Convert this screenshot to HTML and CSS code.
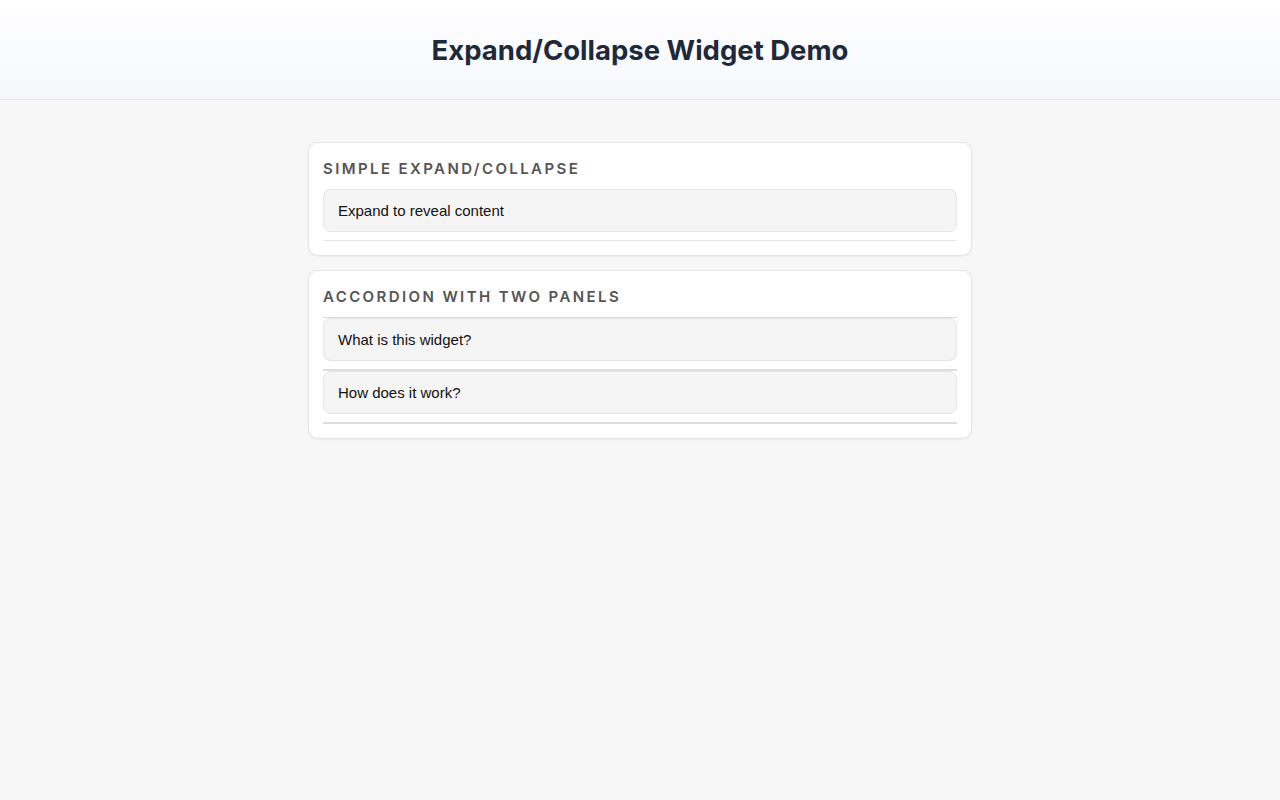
FILE: index.html
```html
<!DOCTYPE html>
<html lang="en">
<head>
    <meta charset="UTF-8">
    <meta name="viewport" content="width=device-width, initial-scale=1.0">
    <title>Expand/Collapse Widget Demo</title>
    <link rel="stylesheet" href="styles.css">
</head>
<body>
    <header class="page-header">
        <h1>Expand/Collapse Widget Demo</h1>
    </header>

    <main class="container">
        <section class="demo-card">
            <h2 class="demo-label">Simple Expand/Collapse</h2>
            <details class="panel panel-single">
                <summary>Expand to reveal content</summary>
                <div class="panel-body">This content is hidden until the panel is expanded.</div>
            </details>
        </section>

        <section class="demo-card">
            <h2 class="demo-label">Accordion with two panels</h2>
            <div class="accordion">
                <details class="panel" name="faq">
                    <summary>What is this widget?</summary>
                    <div class="panel-body">A small disclosure widget built on the native details element.</div>
                </details>
                <details class="panel" name="faq">
                    <summary>How does it work?</summary>
                    <div class="panel-body">Click a heading to open it; opening one panel closes the other.</div>
                </details>
            </div>
        </section>
    </main>
</body>
</html>
```

FILE: styles.css
```css
body {
    margin: 0;
    background: #f7f7f7;
    font-family: "Liberation Sans", Arial, sans-serif;
    color: #111;
}

.page-header {
    height: 99px;
    display: flex;
    align-items: center;
    justify-content: center;
    background: linear-gradient(#ffffff, #f5f7fb);
    border-bottom: 1px solid #e6e8ec;
}

.page-header h1 {
    margin: 0;
    font-family: Inter, "Noto Sans", sans-serif;
    font-size: 27.5px;
    line-height: 34px;
    font-weight: 700;
    color: #1e293b;
}

.container {
    max-width: 664px;
    margin: 0 auto;
    padding: 42px 0;
    display: flex;
    flex-direction: column;
    gap: 14px;
}

.demo-card {
    background: #fff;
    border: 1px solid #e5e5e5;
    border-radius: 10px;
    padding: 14px;
    box-shadow: 0 1px 2px rgba(0, 0, 0, 0.05);
}

.demo-label {
    margin: 0 0 8px;
    font-family: Inter, "Noto Sans", sans-serif;
    font-size: 15px;
    line-height: 24px;
    font-weight: 600;
    letter-spacing: 2.4px;
    text-transform: uppercase;
    color: #555;
}

.panel {
    padding-bottom: 8px;
    border-bottom: 1px solid #e6e6e9;
}

.accordion .panel {
    border-top: 1px solid #dddddd;
    border-bottom: 1px solid #dddddd;
}

.accordion .panel:last-child {
    border-bottom-width: 2px;
}

.panel summary {
    list-style: none;
    cursor: pointer;
    padding: 12px 14px;
    font-size: 15px;
    line-height: 17px;
    background: #f5f5f5;
    border: 1px solid #e5e5e7;
    border-radius: 8px;
}

.panel summary::-webkit-details-marker {
    display: none;
}

.panel-body {
    padding: 10px 14px 2px;
    font-size: 15px;
    line-height: 20px;
    color: #333;
}
```
